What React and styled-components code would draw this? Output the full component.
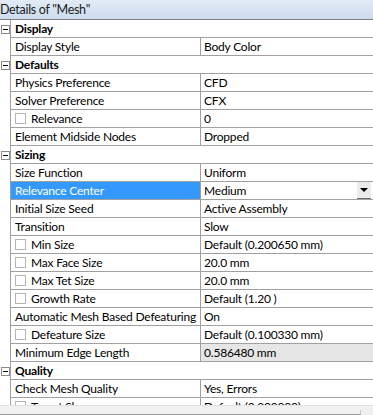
import React from 'react'
import styled, { createGlobalStyle } from 'styled-components'

const GlobalStyle = createGlobalStyle`
  html, body {
    margin: 0;
    padding: 0;
    background: #ffffff;
  }
  body {
    font-family: "Segoe UI", Lato, "Noto Sans", sans-serif;
    font-size: 12px;
    letter-spacing: -0.2px;
    color: #000000;
  }
`

const Panel = styled.div({
  width: '373px',
  height: '415px',
  overflow: 'hidden',
  display: 'flex',
  flexDirection: 'column',
  background: '#ffffff',
})

const Header = styled.div({
  height: '19px',
  flex: '0 0 19px',
  borderBottom: '1px solid #7d7f84',
  background: 'linear-gradient(#e2ebf6, #cddcee)',
  display: 'flex',
  alignItems: 'center',
  fontSize: '12.5px',
  letterSpacing: '-0.3px',
  color: '#1b1b1b',
  whiteSpace: 'nowrap',
})

const Body = styled.div({
  flex: '1 1 auto',
  overflow: 'hidden',
})

const Row = styled.div({
  display: 'flex',
  height: '18px',
})

const Gutter = styled.div({
  width: '10px',
  flex: '0 0 10px',
  borderRight: '1px solid #a0a0a0',
  display: 'flex',
  alignItems: 'center',
  justifyContent: 'center',
})

const Toggle = styled.span({
  width: '7px',
  height: '7px',
  border: '1px solid #8c8c8c',
  background: '#ffffff',
  position: 'relative',
  '&::after': {
    content: '""',
    position: 'absolute',
    left: '1px',
    right: '1px',
    top: '3px',
    height: '1px',
    background: '#000000',
  },
})

const Cell = styled.div(({ $selected, $readonly }) => ({
  height: '17px',
  borderBottom: '1px solid #a0a0a0',
  display: 'flex',
  alignItems: 'center',
  whiteSpace: 'nowrap',
  overflow: 'hidden',
  background: $selected ? '#3399ff' : $readonly ? '#e6e6e6' : '#ffffff',
  color: $selected ? '#ffffff' : '#000000',
}))

const LabelCell = styled(Cell)({
  width: '185px',
  flex: '0 0 185px',
  paddingLeft: '4px',
  borderRight: '1px solid #a0a0a0',
  gap: '5px',
})

const ValueCell = styled(Cell)({
  flex: '1 1 auto',
  paddingLeft: '3px',
  position: 'relative',
})

const GroupCell = styled(Cell)({
  flex: '1 1 auto',
  paddingLeft: '4px',
  fontWeight: 700,
})

const CheckBox = styled.span({
  width: '9px',
  height: '9px',
  flex: '0 0 9px',
  border: '1px solid #b4b4b4',
  background: '#ffffff',
})

const DropButton = styled.span({
  position: 'absolute',
  right: '2px',
  top: '0px',
  width: '14px',
  height: '16px',
  background: '#ebebeb',
  borderBottom: '1px solid #6e6e6e',
  display: 'flex',
  alignItems: 'center',
  justifyContent: 'center',
})

const Arrow = styled.span({
  width: 0,
  height: 0,
  borderLeft: '4px solid transparent',
  borderRight: '4px solid transparent',
  borderTop: '4px solid #000000',
})

const ScrollBar = styled.div({
  height: '9px',
  flex: '0 0 9px',
  background: '#f0f0f0',
  borderTop: '1px solid #e2e2e2',
  display: 'flex',
  alignItems: 'flex-end',
})

const Thumb = styled.div({
  width: '360px',
  height: '4px',
  borderBottom: '1px solid #9a9a9a',
  borderRight: '1px solid #c8c8c8',
})

const rows = [
  { group: 'Display' },
  { label: 'Display Style', value: 'Body Color' },
  { group: 'Defaults' },
  { label: 'Physics Preference', value: 'CFD' },
  { label: 'Solver Preference', value: 'CFX' },
  { label: 'Relevance', value: '0', check: true },
  { label: 'Element Midside Nodes', value: 'Dropped' },
  { group: 'Sizing' },
  { label: 'Size Function', value: 'Uniform' },
  { label: 'Relevance Center', value: 'Medium', selected: true, drop: true },
  { label: 'Initial Size Seed', value: 'Active Assembly' },
  { label: 'Transition', value: 'Slow' },
  { label: 'Min Size', value: 'Default (0.200650 mm)', check: true },
  { label: 'Max Face Size', value: '20.0 mm', check: true },
  { label: 'Max Tet Size', value: '20.0 mm', check: true },
  { label: 'Growth Rate', value: 'Default (1.20 )', check: true },
  { label: 'Automatic Mesh Based Defeaturing', value: 'On' },
  { label: 'Defeature Size', value: 'Default (0.100330 mm)', check: true },
  { label: 'Minimum Edge Length', value: '0.586480 mm', readonly: true },
  { group: 'Quality' },
  { label: 'Check Mesh Quality', value: 'Yes, Errors' },
  { label: 'Target Skewness', value: 'Default (0.900000)', check: true },
]

const App = () => {
  return (
    <Panel>
      <GlobalStyle />
      <Header>Details of "Mesh"</Header>
      <Body>
        {rows.map((row, i) =>
          row.group ? (
            <Row key={i}>
              <Gutter>
                <Toggle />
              </Gutter>
              <GroupCell>{row.group}</GroupCell>
            </Row>
          ) : (
            <Row key={i}>
              <Gutter />
              <LabelCell $selected={row.selected}>
                {row.check && <CheckBox />}
                {row.label}
              </LabelCell>
              <ValueCell $readonly={row.readonly}>
                {row.value}
                {row.drop && (
                  <DropButton>
                    <Arrow />
                  </DropButton>
                )}
              </ValueCell>
            </Row>
          )
        )}
      </Body>
      <ScrollBar>
        <Thumb />
      </ScrollBar>
    </Panel>
  )
}

export default App
